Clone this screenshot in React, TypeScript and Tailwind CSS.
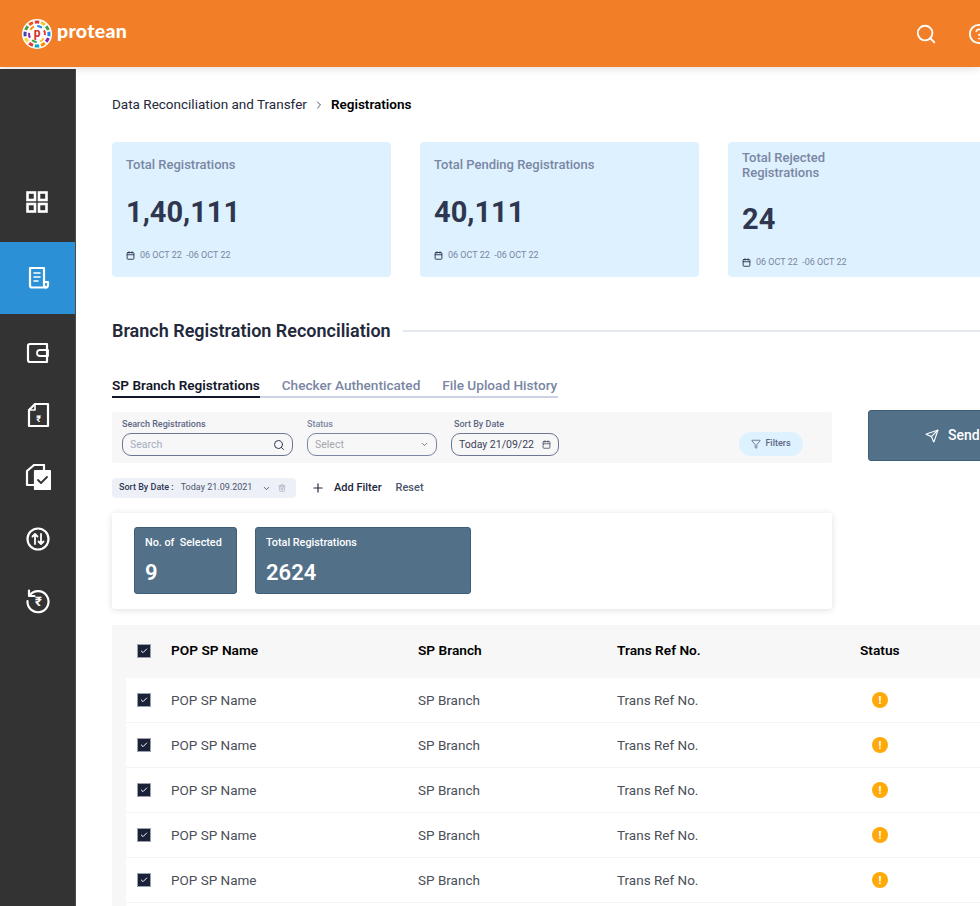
import { Search, HelpCircle, ChevronDown, ChevronRight, Calendar, Filter, Plus, Trash2, Send, Check } from 'lucide-react';

const cards = [
  { title: 'Total Registrations', value: '1,40,111' },
  { title: 'Total Pending Registrations', value: '40,111' },
  { title: 'Total Rejected Registrations', value: '24', wrap: true },
];

const rows = [0, 1, 2, 3, 4];

function Logo() {
  const outer = ['#e53935', '#fbc02d', '#43a047', '#1e88e5', '#8e24aa', '#fb8c00', '#00acc1', '#e53935', '#fdd835', '#3949ab', '#43a047', '#f4511e'];
  const inner = ['#1e88e5', '#e53935', '#fbc02d', '#43a047', '#8e24aa', '#fb8c00'];
  return (
    <svg width="30" height="30" viewBox="0 0 30 30">
      <circle cx="15" cy="15" r="15" fill="#fff" />
      {outer.map((c, i) => (
        <path key={i} d="M12.800 3.200 A12 12 0 0 1 17.200 3.200" transform={`rotate(${i * 30} 15 15)`} stroke={c} strokeWidth="3" fill="none" />
      ))}
      {inner.map((c, i) => (
        <path key={i} d="M12.500 7.400 A8 8 0 0 1 17.500 7.400" transform={`rotate(${i * 60 + 20} 15 15)`} stroke={c} strokeWidth="2" fill="none" />
      ))}
      <circle cx="15" cy="15" r="5.800" fill="#fff" />
      <text x="15" y="18" textAnchor="middle" fontSize="12" fontWeight="700" fill="#d32f2f" fontFamily="Roboto, sans-serif">p</text>
    </svg>
  );
}

function SideIcon({ children }: { children: React.ReactNode }) {
  return (
    <svg width="26" height="26" viewBox="0 0 26 26" fill="none" stroke="#fff" strokeWidth="2.200" strokeLinejoin="round" strokeLinecap="round">
      {children}
    </svg>
  );
}

function Checkbox() {
  return (
    <span className="flex h-3 w-3 items-center justify-center bg-[#1b2136] outline outline-1 outline-[#9aa0b0]">
      <Check size={8} color="#fff" strokeWidth={3} />
    </span>
  );
}

function StatusDot() {
  return (
    <span className="flex h-4 w-4 items-center justify-center rounded-full bg-[#ffa90a] text-[11px] font-bold leading-none text-white">!</span>
  );
}

export default function App() {
  return (
    <div className="flex h-[906px] w-[980px] flex-col overflow-hidden bg-white font-['Roboto',sans-serif]">
      <header className="flex h-[67px] shrink-0 items-center bg-[#f27f27] pl-[22px] shadow-[0_2px_8px_rgba(0,0,0,0.12)]">
        <Logo />
        <span className="mb-[5px] ml-[5px] font-['Lato',sans-serif] text-[19.500px] font-black tracking-[0.3px] text-white">protean</span>
        <div className="ml-auto flex shrink-0 items-center gap-[31px]">
          <Search size={22} color="#fff" strokeWidth={2} className="-ml-[1px]" />
          <div className="w-[12px] overflow-hidden">
            <HelpCircle size={22} color="#fff" strokeWidth={2} className="shrink-0" />
          </div>
        </div>
      </header>

      <div className="mt-[2px] flex min-h-0 flex-1">
        <aside className="flex w-[76px] shrink-0 flex-col border-r border-[#4a4a4a] bg-[#333333]">
          <div className="flex h-[173px] shrink-0 items-end justify-center pb-[27px] pr-[1px]">
            <SideIcon>
              <rect x="3.500" y="3.500" width="7.500" height="7.500" strokeWidth="2.600" strokeLinejoin="miter" />
              <rect x="15" y="3.500" width="7.500" height="7.500" strokeWidth="2.600" strokeLinejoin="miter" />
              <rect x="3.500" y="15" width="7.500" height="7.500" strokeWidth="2.600" strokeLinejoin="miter" />
              <rect x="15" y="15" width="7.500" height="7.500" strokeWidth="2.600" strokeLinejoin="miter" />
            </SideIcon>
          </div>
          <div className="flex h-[72px] shrink-0 items-center justify-center bg-[#2b90d5]">
            <SideIcon>
              <path d="M5 3h14v17a2.500 2.500 0 0 0 2.500 2.500H7a2 2 0 0 1-2-2z" />
              <path d="M19 17h4v3a2.500 2.500 0 0 1-2.500 2.500" />
              <path d="M9 8h6M9 12h6M9 16h4" strokeWidth="1.600" />
            </SideIcon>
          </div>
          <div className="flex flex-col items-center gap-[36px] pt-[26px]">
            <SideIcon>
              <path d="M3 6a2 2 0 0 1 2-2h17v18H5a2 2 0 0 1-2-2z" />
              <path d="M23 10h-8a3 3 0 0 0 0 6h8z" strokeWidth="1.800" />
            </SideIcon>
            <SideIcon>
              <path d="M10 2h13v22H4V8z" />
              <path d="M10 2v6H4" strokeWidth="1.600" />
              <text x="13.500" y="20" textAnchor="middle" fontSize="9" fontWeight="700" fill="#fff" stroke="none" fontFamily="Roboto, sans-serif">₹</text>
            </SideIcon>
            <SideIcon>
              <path d="M9 1h10v6H11v14H2V7z" />
              <rect x="10" y="7" width="15" height="18" fill="#fff" />
              <path d="M13 16l3 3 6-6" stroke="#333" strokeWidth="1.800" />
            </SideIcon>
            <SideIcon>
              <circle cx="13" cy="13" r="10.500" />
              <path d="M10 18V8M7.500 10.500 10 8l2.500 2.500M16 8v10M13.500 15.500 16 18l2.500-2.500" strokeWidth="1.800" />
            </SideIcon>
            <SideIcon>
              <path d="M4.500 7.500A10.500 10.500 0 1 1 2.500 13" />
              <path d="M4 2.500v5.500h5.500" />
              <text x="13.500" y="18" textAnchor="middle" fontSize="13" fontWeight="700" fill="#fff" stroke="none" fontFamily="Roboto, sans-serif">₹</text>
            </SideIcon>
          </div>
        </aside>

        <main className="min-w-0 flex-1 overflow-hidden pl-[36px] pt-[28px]">
          <nav className="flex h-[16px] items-center whitespace-nowrap text-[13.500px] leading-none text-[#23283a]">
            <span>Data Reconciliation and Transfer</span>
            <ChevronRight size={12} className="mx-[6px]" color="#555" />
            <span className="font-semibold text-black">Registrations</span>
          </nav>

          <section className="mt-[29px] flex gap-[29px]">
            {cards.map((c) => (
              <div key={c.title} className="flex h-[135px] w-[279px] shrink-0 flex-col rounded-[4px] bg-[#def1ff] px-[14px]">
                {c.wrap ? (
                  <p className="mt-[8px] w-[110px] text-[13px] font-medium leading-[15px] text-[#7a86a3]">{c.title}</p>
                ) : (
                  <p className="mt-[15px] text-[13px] font-medium leading-[15px] text-[#7a86a3]">{c.title}</p>
                )}
                <p className={`${c.wrap ? 'mt-[21px]' : 'mt-[22px]'} text-[29px] font-bold leading-[36px] text-[#2f3750]`}>{c.value}</p>
                <div className={`${c.wrap ? 'mb-[10px]' : 'mb-[17px]'} mt-auto flex items-center gap-[5px] text-[9px] leading-none text-[#7a86a3]`}>
                  <Calendar size={9} color="#2f3750" strokeWidth={2.500} />
                  <span>06 OCT 22 &nbsp;-06 OCT 22</span>
                </div>
              </div>
            ))}
          </section>

          <div className="mt-[43px] flex items-center">
            <h2 className="whitespace-nowrap text-[18px] font-semibold leading-[22px] text-[#23283a]">Branch Registration Reconciliation</h2>
            <div className="ml-[12px] h-[2px] flex-1 bg-[#e4e8ef]" />
          </div>

          <div className="mt-[32px] flex w-[446px] gap-[22px] whitespace-nowrap border-b-2 border-[#ccd3e6] text-[13.600px] font-medium leading-[22px] text-[#7a86a3]">
            <span className="-mb-[2px] border-b-2 border-[#12162a] font-semibold text-[#12162a]">SP Branch Registrations</span>
            <span>Checker Authenticated</span>
            <span>File Upload History</span>
          </div>

          <div className="flex items-start">
            <div className="mt-[14px] w-[720px] shrink-0">
              <div className="flex h-[51px] rounded-[3px] bg-[#f7f7f7] pl-[10px] pt-[7px]">
                <label className="block w-[171px] shrink-0">
                  <span className="block text-[9px] font-medium leading-[11px] text-[#5d6885]">Search Registrations</span>
                  <span className="mt-[3px] flex h-[23px] items-center justify-between rounded-[9px] border border-[#6c7690] px-[7px] text-[10.500px] text-[#a5adc0]">
                    Search
                    <Search size={12} color="#2f3750" />
                  </span>
                </label>
                <label className="ml-[14px] block w-[130px] shrink-0">
                  <span className="block text-[9px] font-medium leading-[11px] text-[#7a86a3]">Status</span>
                  <span className="mt-[3px] flex h-[23px] items-center justify-between rounded-[9px] border border-[#7a86a3] px-[7px] text-[10.500px] text-[#a5a8b0]">
                    Select
                    <ChevronDown size={9} color="#555" />
                  </span>
                </label>
                <label className="ml-[14px] block w-[108px] shrink-0">
                  <span className="block pl-[3px] text-[9px] font-medium leading-[11px] text-[#5d6885]">Sort By Date</span>
                  <span className="mt-[3px] flex h-[23px] items-center justify-between rounded-[9px] border border-[#6c7690] px-[7px] text-[10.500px] text-[#3b4258]">
                    Today 21/09/22
                    <Calendar size={9} color="#3b4258" />
                  </span>
                </label>
                <button className="ml-[180px] mt-[13px] flex h-[24px] w-[64px] items-center justify-center gap-[4px] rounded-full bg-[#def1ff] text-[9px] font-medium text-[#5d6885]">
                  <Filter size={10} color="#5d6885" />
                  Filters
                </button>
              </div>

              <div className="mt-[15px] flex h-[20px] items-center">
                <div className="flex h-[20px] w-[184px] items-center rounded-[4px] bg-[#eef0f8] pl-[7px] text-[9px] text-[#4c556d]">
                  <span className="font-medium text-[#2f3750]">Sort By Date :</span>
                  <span className="ml-[7px]">Today 21.09.2021</span>
                  <ChevronDown size={9} className="ml-[10px]" color="#2f3750" />
                  <Trash2 size={8} className="ml-[7px]" color="#9aa3b8" />
                </div>
                <Plus size={14} className="ml-[15px]" color="#23283a" />
                <span className="ml-[9px] text-[11px] font-medium text-[#23283a]">Add Filter</span>
                <span className="ml-[14px] text-[11px] font-medium text-[#4c556d]">Reset</span>
              </div>

              <div className="mt-[15px] flex h-[96px] gap-[18px] rounded-[2px] bg-white pl-[22px] pt-[14px] shadow-[0_1px_7px_rgba(0,0,0,0.13)]">
                <div className="h-[67px] w-[103px] rounded-[3px] border border-[#3f5f78] bg-[#537089] px-[10px] pt-[8px] text-white">
                  <p className="text-[10.800px] font-medium leading-[14px]">No. of&nbsp; Selected</p>
                  <p className="mt-[10px] text-[22px] font-semibold leading-[26px]">9</p>
                </div>
                <div className="h-[67px] w-[216px] rounded-[3px] border border-[#3f5f78] bg-[#537089] px-[10px] pt-[8px] text-white">
                  <p className="text-[10.800px] font-medium leading-[14px]">Total Registrations</p>
                  <p className="mt-[10px] text-[22px] font-semibold leading-[26px]">2624</p>
                </div>
              </div>
            </div>

            <button className="ml-[36px] mt-[12px] flex h-[51px] w-[200px] shrink-0 items-center gap-[9px] rounded-[3px] border border-[#3f5f78] bg-[#537089] pl-[56px] text-[14px] font-medium text-white">
              <Send size={14} color="#fff" />
              Send
            </button>
          </div>

          <div className="mt-[16px] h-[300px] w-[900px] bg-[#f7f7f7] pl-[14px]">
            <div className="flex h-[53px] items-center pb-[2px] text-[13.700px] font-semibold text-black">
              <div className="flex w-[45px] shrink-0 pl-[12px]"><Checkbox /></div>
              <div className="w-[247px] shrink-0">POP SP Name</div>
              <div className="w-[199px] shrink-0">SP Branch</div>
              <div className="w-[243px] shrink-0">Trans Ref No.</div>
              <div>Status</div>
            </div>
            {rows.map((r) => (
              <div key={r} className="flex h-[45px] items-center border-b border-[#f4f4f4] bg-white text-[13.500px] text-[#4b4f58]">
                <div className="flex w-[45px] shrink-0 pl-[12px]"><Checkbox /></div>
                <div className="w-[247px] shrink-0">POP SP Name</div>
                <div className="w-[199px] shrink-0">SP Branch</div>
                <div className="w-[243px] shrink-0">Trans Ref No.</div>
                <div className="pl-[12px]"><StatusDot /></div>
              </div>
            ))}
            <div className="h-[22px] bg-white" />
          </div>
        </main>
      </div>
    </div>
  );
}
